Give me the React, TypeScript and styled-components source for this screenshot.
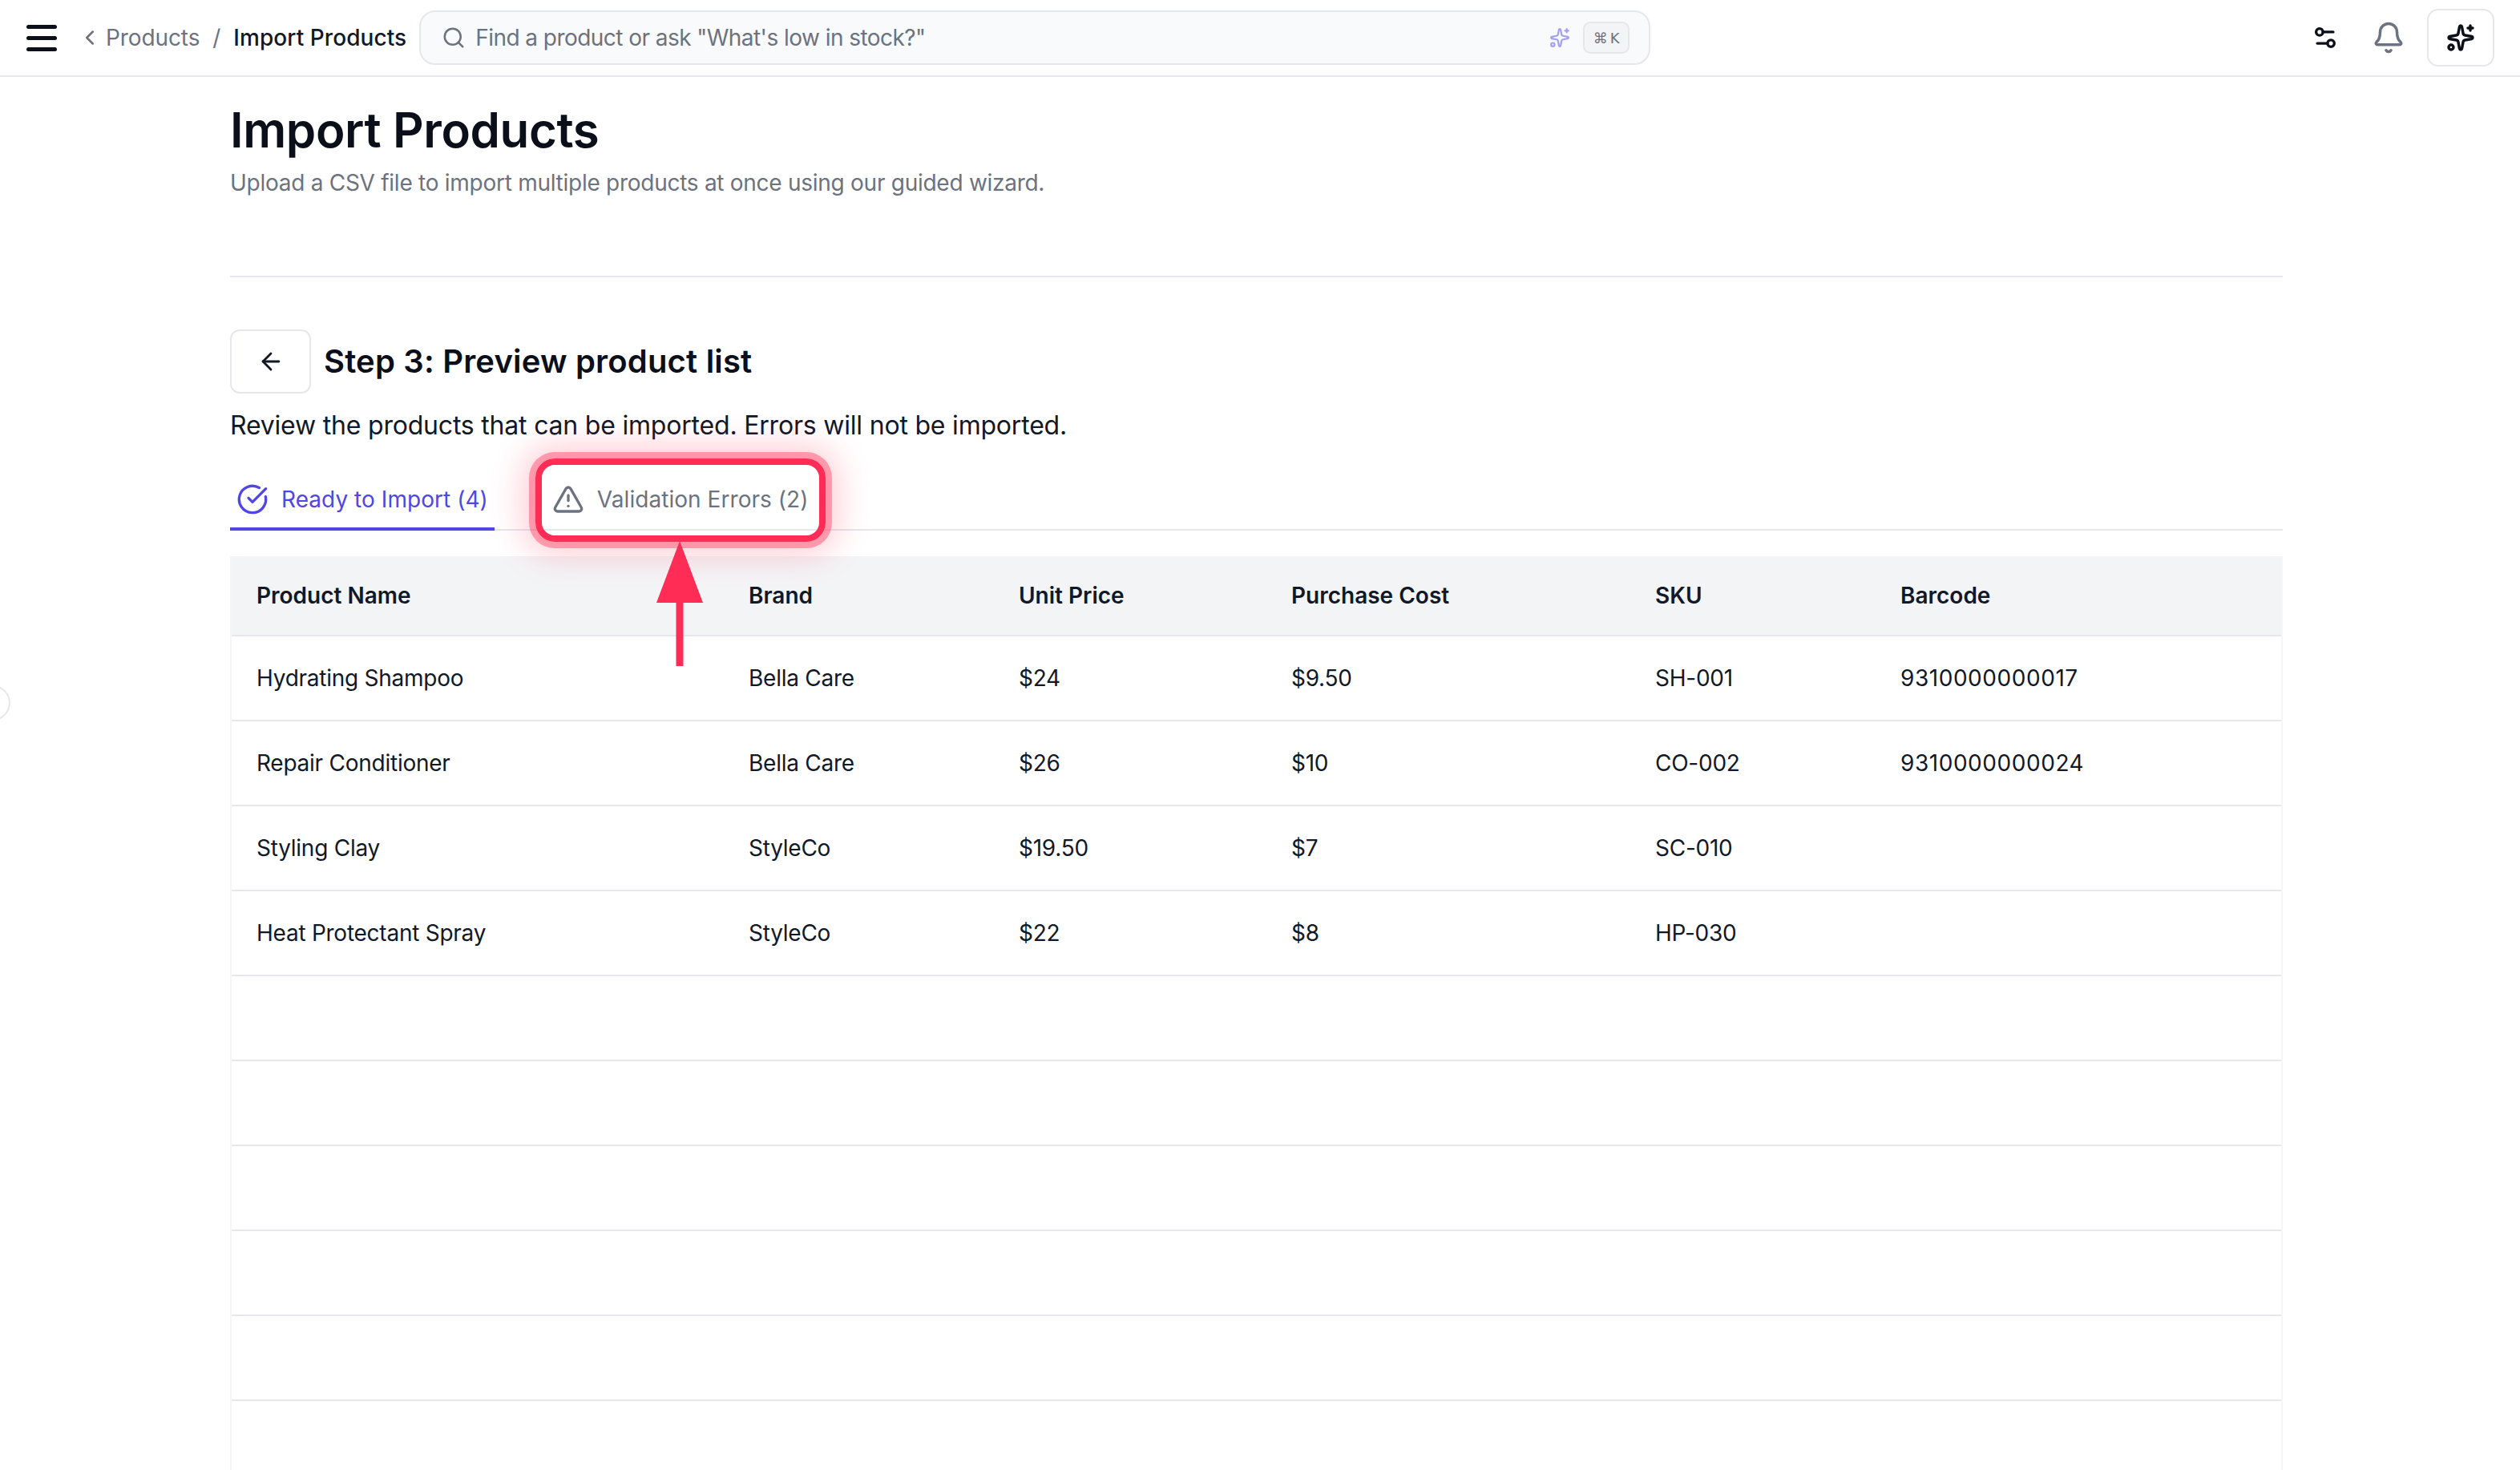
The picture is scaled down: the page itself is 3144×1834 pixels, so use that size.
import styled, { createGlobalStyle } from "styled-components";
import {
  ArrowLeft,
  Bell,
  ChevronLeft,
  CircleCheckBig,
  Search,
  Settings2,
  Sparkles,
  TriangleAlert,
} from "lucide-react";

const GlobalStyle = createGlobalStyle`
  * { box-sizing: border-box; }
  html, body { margin: 0; padding: 0; background: #fff; }
  body {
    font-family: Inter, "Noto Sans", sans-serif;
    color: #111827;
    height: 1834px;
    overflow: hidden;
  }
`;

const Page = styled.div`
  position: relative;
  width: 3144px;
  height: 1834px;
  overflow: hidden;
  background: #fff;
`;

const TopBar = styled.header`
  height: 96px;
  display: flex;
  align-items: center;
  padding: 0 32px 0 33px;
  border-bottom: 2px solid #e5e7eb;
`;

const Burger = styled.div`
  width: 38px;
  height: 33px;
  display: flex;
  flex-direction: column;
  justify-content: space-between;
  margin-right: 26px;
  span {
    display: block;
    height: 5px;
    border-radius: 3px;
    background: #0b0f19;
  }
`;

const Crumbs = styled.nav`
  display: flex;
  align-items: center;
  font-size: 28px;
  letter-spacing: -0.1px;
  color: #6b7280;
  svg { margin-right: 5px; }
`;

const Slash = styled.span`
  margin: 0 16px;
`;

const Current = styled.span`
  color: #111827;
  font-weight: 500;
  letter-spacing: 0.07px;
`;

const SearchBox = styled.div`
  width: 1536px;
  height: 68px;
  margin-left: 16px;
  display: flex;
  align-items: center;
  padding: 0 24px 0 26px;
  background: #f9fafb;
  border: 2px solid #e5e7eb;
  border-radius: 20px;
  color: #6b7280;
  font-size: 28px;
  letter-spacing: -0.55px;
`;

const SearchText = styled.span`
  flex: 1;
  margin-left: 12px;
`;

const Kbd = styled.kbd`
  width: 58px;
  height: 40px;
  margin-left: 16px;
  display: flex;
  align-items: center;
  justify-content: center;
  gap: 3px;
  background: #f3f4f6;
  border: 2px solid #e5e7eb;
  border-radius: 9px;
  font-family: "DejaVu Sans", sans-serif;
  font-size: 18px;
  letter-spacing: 0;
  color: #6b7280;
`;

const TopActions = styled.div`
  margin-left: auto;
  display: flex;
  align-items: center;
`;

const BellSlot = styled.span`
  display: flex;
  color: #6b7280;
  margin: 0 27px 0 41px;
`;

const AiButton = styled.div`
  width: 84px;
  height: 72px;
  display: flex;
  align-items: center;
  justify-content: center;
  border: 2px solid #e5e7eb;
  border-radius: 14px;
`;

const Main = styled.main`
  padding: 0 296px 0 287px;
`;

const Title = styled.h1`
  margin: 0;
  padding-top: 30px;
  font-size: 60px;
  line-height: 72px;
  font-weight: 600;
  letter-spacing: -0.4px;
  color: #0b0f19;
`;

const Subtitle = styled.p`
  margin: 10px 0 0;
  font-size: 28px;
  line-height: 40px;
  letter-spacing: -0.27px;
  color: #6b7280;
`;

const Divider = styled.hr`
  margin: 96px 0 0;
  border: 0;
  border-top: 2px solid #e5e7eb;
`;

const StepHead = styled.div`
  margin-top: 65px;
  display: flex;
  align-items: center;
  gap: 16px;
`;

const BackButton = styled.button`
  width: 101px;
  height: 80px;
  padding: 0;
  display: flex;
  align-items: center;
  justify-content: center;
  background: #fff;
  border: 2px solid #e5e7eb;
  border-radius: 12px;
  color: #111827;
`;

const StepTitle = styled.h2`
  margin: 0;
  font-size: 40px;
  font-weight: 600;
  line-height: 48px;
  letter-spacing: 0.18px;
  color: #0b0f19;
`;

const StepHint = styled.p`
  margin: 19px 0 0;
  font-size: 32px;
  line-height: 42px;
  letter-spacing: -0.2px;
  color: #111827;
`;

const Tabs = styled.div`
  position: relative;
  margin-top: 35px;
  height: 75px;
  display: flex;
  border-bottom: 2px solid #e5e7eb;
`;

const Tab = styled.div<{ $active?: boolean }>`
  height: 75px;
  display: flex;
  align-items: center;
  gap: 16px;
  padding: 0 8px;
  font-size: 28px;
  letter-spacing: 0.05px;
  color: ${({ $active }) => ($active ? "#4f46e5" : "#6b7280")};
  border-bottom: 4px solid ${({ $active }) => ($active ? "#4f46e5" : "transparent")};
  margin-right: 64px;
`;

const Callout = styled.div`
  position: absolute;
  left: 381px;
  top: -15px;
  width: 362px;
  height: 104px;
  border: 8px solid #ff2d55;
  border-radius: 24px;
  box-shadow: 0 0 0 8px rgba(255, 45, 85, 0.4), 0 0 40px 16px rgba(255, 45, 85, 0.24);
  z-index: 2;
`;

const CalloutArrow = styled.svg`
  position: absolute;
  left: 531px;
  top: 88px;
  z-index: 3;
`;

const Table = styled.div`
  margin-top: 32px;
  border-left: 2px solid #f6f6f7;
  border-right: 2px solid #f6f6f7;
`;

const Row = styled.div<{ $head?: boolean }>`
  height: ${({ $head }) => ($head ? "100px" : "106px")};
  display: grid;
  grid-template-columns: 614px 337px 340px 454px 306px 1fr;
  align-items: center;
  background: ${({ $head }) => ($head ? "#f3f4f6" : "#fff")};
  border-bottom: 2px solid #e5e7eb;
  font-size: 28px;
  font-weight: ${({ $head }) => ($head ? 600 : 400)};
  letter-spacing: ${({ $head }) => ($head ? "0" : "-0.25px")};
  color: #111827;
`;

const Cell = styled.div`
  padding-left: 31px;
`;

const BarcodeCell = styled(Cell)`
  letter-spacing: 0.55px;
`;

const EdgeHandle = styled.div`
  position: absolute;
  left: -31px;
  top: 855px;
  width: 44px;
  height: 44px;
  border: 2px solid #e5e7eb;
  border-radius: 50%;
  background: #fff;
`;

const columns = ["Product Name", "Brand", "Unit Price", "Purchase Cost", "SKU", "Barcode"];

const products = [
  { name: "Hydrating Shampoo", brand: "Bella Care", price: "$24", cost: "$9.50", sku: "SH-001", barcode: "9310000000017" },
  { name: "Repair Conditioner", brand: "Bella Care", price: "$26", cost: "$10", sku: "CO-002", barcode: "9310000000024" },
  { name: "Styling Clay", brand: "StyleCo", price: "$19.50", cost: "$7", sku: "SC-010", barcode: "" },
  { name: "Heat Protectant Spray", brand: "StyleCo", price: "$22", cost: "$8", sku: "HP-030", barcode: "" },
];

const emptyRows = [0, 1, 2, 3, 4, 5];

export default function App() {
  return (
    <Page>
      <GlobalStyle />
      <TopBar>
        <Burger>
          <span />
          <span />
          <span />
        </Burger>
        <Crumbs>
          <ChevronLeft size={30} strokeWidth={2} />
          Products
          <Slash>/</Slash>
          <Current>Import Products</Current>
        </Crumbs>
        <SearchBox>
          <Search size={30} strokeWidth={2} />
          <SearchText>Find a product or ask "What's low in stock?"</SearchText>
          <Sparkles size={26} strokeWidth={2} color="#a5a0ee" />
          <Kbd>
            <span>⌘</span>
            <span>K</span>
          </Kbd>
        </SearchBox>
        <TopActions>
          <Settings2 size={34} strokeWidth={2.4} color="#0b0f19" />
          <BellSlot>
            <Bell size={42} strokeWidth={2} />
          </BellSlot>
          <AiButton>
            <Sparkles size={36} strokeWidth={2.3} color="#0b0f19" />
          </AiButton>
        </TopActions>
      </TopBar>

      <Main>
        <Title>Import Products</Title>
        <Subtitle>Upload a CSV file to import multiple products at once using our guided wizard.</Subtitle>
        <Divider />

        <StepHead>
          <BackButton aria-label="back">
            <ArrowLeft size={34} strokeWidth={2} />
          </BackButton>
          <StepTitle>Step 3: Preview product list</StepTitle>
        </StepHead>
        <StepHint>Review the products that can be imported. Errors will not be imported.</StepHint>

        <Tabs>
          <Tab $active>
            <CircleCheckBig size={40} strokeWidth={2} />
            Ready to Import (4)
          </Tab>
          <Tab>
            <TriangleAlert size={40} strokeWidth={2} />
            Validation Errors (2)
          </Tab>
          <Callout />
          <CalloutArrow width="60" height="158" viewBox="0 0 60 158">
            <path d="M30 0 L59 77 L34.5 77 L34.5 156 L25.5 156 L25.5 77 L1 77 Z" fill="#ff2d55" />
          </CalloutArrow>
        </Tabs>

        <Table>
          <Row $head>
            {columns.map((name) => (
              <Cell key={name}>{name}</Cell>
            ))}
          </Row>
          {products.map((p) => (
            <Row key={p.sku}>
              <Cell>{p.name}</Cell>
              <Cell>{p.brand}</Cell>
              <Cell>{p.price}</Cell>
              <Cell>{p.cost}</Cell>
              <Cell>{p.sku}</Cell>
              <BarcodeCell>{p.barcode}</BarcodeCell>
            </Row>
          ))}
          {emptyRows.map((i) => (
            <Row key={i} />
          ))}
        </Table>
      </Main>
      <EdgeHandle />
    </Page>
  );
}
